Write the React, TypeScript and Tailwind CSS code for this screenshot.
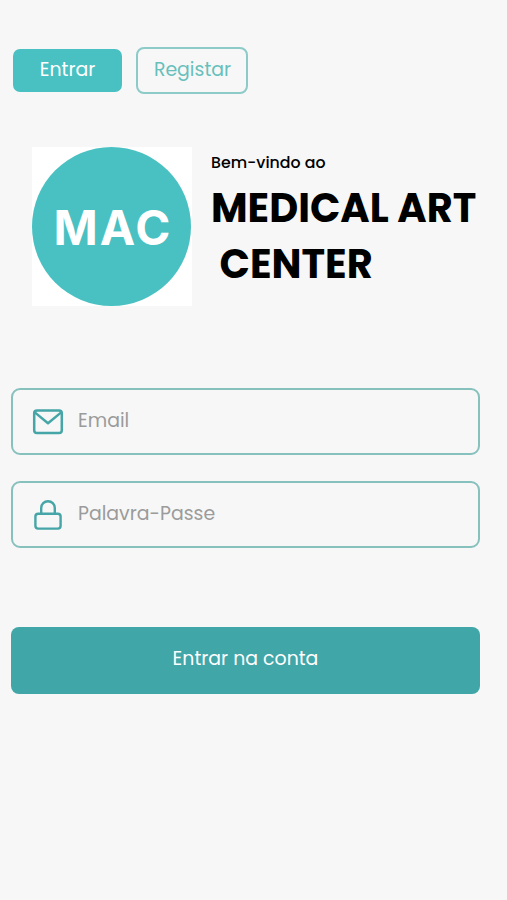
import type { ReactNode } from "react";

function MailIcon() {
  return (
    <svg width="32" height="28" viewBox="0 0 32 28" fill="none" stroke="#46a5a7" strokeWidth="2.5" strokeLinecap="round" strokeLinejoin="round">
      <rect x="2.2" y="2.6" width="27.6" height="22.4" rx="2.8" />
      <path d="M2.8 4.4 16 15.2 29.2 4.4" />
    </svg>
  );
}

function LockIcon() {
  return (
    <svg width="32" height="32" viewBox="0 0 32 32" fill="none" stroke="#46a5a7" strokeWidth="2.4" strokeLinecap="round" strokeLinejoin="round">
      <rect x="3.4" y="14.8" width="25.2" height="14.8" rx="2.8" />
      <path d="M9.2 14.8V9a6.8 6.8 0 0 1 13.6 0v5.8" />
    </svg>
  );
}

function Field({ icon, children }: { icon: ReactNode; children: ReactNode }) {
  return (
    <div className="flex h-[67px] items-center rounded-[9px] border-2 border-[#86c1be] pl-[19px] text-[#9b9b9b]">
      {icon}
      {children}
    </div>
  );
}

export default function App() {
  return (
    <main className="h-[900px] w-[507px] overflow-hidden bg-[#f7f7f7] pt-[47px] font-['Poppins','Inter',sans-serif]">
      <nav className="flex h-[47px] items-center pl-[13px] text-[18.9px]">
        <button className="flex h-[43px] w-[109px] items-center justify-center rounded-[7px] bg-[#49c1c2] pb-px text-white">
          <span>Entrar</span>
        </button>
        <button className="ml-[14px] flex h-[47px] w-[112px] items-center justify-center rounded-[8px] border-2 border-[#8ccbc7] pb-px pl-px text-[#68bfbb]">
          <span>Registar</span>
        </button>
      </nav>

      <header className="mt-[53px] flex h-[159px] pl-[32px]">
        <div className="h-[159px] w-[160px] shrink-0 bg-white">
          <div className="flex h-[159px] w-[159px] items-center justify-center rounded-full bg-[#49c1c2] pt-[3px] pl-[3px] font-['Inter',sans-serif] text-[47.5px] font-bold text-white">
            <span className="tracking-[2px]">MAC</span>
          </div>
        </div>
        <div className="ml-[19px] whitespace-nowrap text-black">
          <p className="mt-[4px] text-[15.8px] leading-[24px] font-medium">
            <span>Bem-vindo ao</span>
          </p>
          <h1 className="mt-[5px] text-[39.9px] leading-[56px] font-bold">
            <span className="block">MEDICAL ART</span>
            <span className="block pl-[8.5px]">CENTER</span>
          </h1>
        </div>
      </header>

      <form className="mt-[82px] ml-[11px] w-[469px] text-[18.9px]">
        <Field icon={<MailIcon />}>
          <span className="ml-[14px] pb-px">Email</span>
        </Field>
        <div className="h-[26px]" />
        <Field icon={<LockIcon />}>
          <span className="ml-[14px] pb-px">Palavra-Passe</span>
        </Field>
        <button type="button" className="mt-[79px] flex h-[67px] w-full items-center justify-center rounded-[8px] bg-[#40a6a8] pb-[2px] text-white">
          <span>Entrar na conta</span>
        </button>
      </form>
    </main>
  );
}
